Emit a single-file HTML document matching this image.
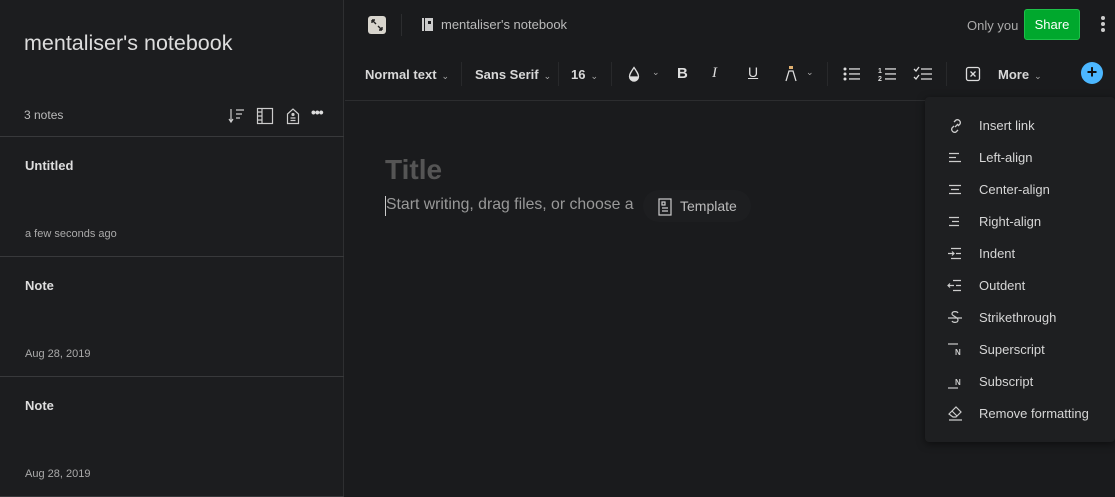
<!DOCTYPE html>
<html><head><meta charset="utf-8"><style>
*{margin:0;padding:0;box-sizing:border-box}
body{width:1115px;height:497px;background:#1a1b1d;font-family:"Liberation Sans",sans-serif;color:#ccc;position:relative;overflow:hidden}
.a{position:absolute;white-space:nowrap}
.side{position:absolute;left:0;top:0;width:344px;height:497px;background:#1c1d1f;border-right:1px solid #2e2f31}
.hl{position:absolute;left:0;width:344px;height:1px;background:#38393b}
.tb{font-size:13px;font-weight:bold;color:#d8d8d8;top:67px}
.chev{font-size:9px;color:#aaa;font-weight:normal;margin-left:5px}
.mi{position:absolute;left:979px;font-size:13px;color:#d6d6d6}
svg{position:absolute}
</style></head><body>
<div class="side">
<div class="a" style="left:24px;top:31px;font-size:21.5px;color:#ddd">mentaliser's notebook</div>
<div class="a" style="left:24px;top:108px;font-size:12px;color:#bbb">3 notes</div>
<svg style="left:228px;top:107px" width="18" height="18" viewBox="0 0 18 18" fill="none" stroke="#ccc" stroke-width="1.2"><path d="M3 2v13M1 12l2 3 2-3M8 3h8M8 7h6M8 11h4"/></svg>
<svg style="left:256px;top:107px" width="18" height="18" viewBox="0 0 18 18" fill="none" stroke="#ccc" stroke-width="1.2"><rect x="1.5" y="1.5" width="15" height="15"/><path d="M6 1.5v15M1.5 5h4.5M1.5 9h4.5M1.5 13h4.5"/></svg>
<svg style="left:286px;top:107px" width="14" height="18" viewBox="0 0 14 18" fill="none" stroke="#ccc" stroke-width="1.2"><path d="M1.5 7L7 2l5.5 5v9.5h-11z M4.5 11h5M4.5 13.5h5"/><circle cx="7" cy="7.5" r="1" fill="#ccc"/></svg>
<div class="a" style="left:311px;top:104px;font-size:14px;font-weight:bold;color:#ddd;letter-spacing:-1px">•••</div>
<div class="hl" style="top:136px"></div>
<div class="a" style="left:25px;top:158px;font-size:13px;font-weight:bold;color:#ddd">Untitled</div>
<div class="a" style="left:25px;top:228px;font-size:11px;color:#aaa">a few seconds ago</div>
<div class="hl" style="top:256px"></div>
<div class="a" style="left:25px;top:278px;font-size:13px;font-weight:bold;color:#ddd">Note</div>
<div class="a" style="left:25px;top:348px;font-size:11px;color:#aaa">Aug 28, 2019</div>
<div class="hl" style="top:376px"></div>
<div class="a" style="left:25px;top:398px;font-size:13px;font-weight:bold;color:#ddd">Note</div>
<div class="a" style="left:25px;top:468px;font-size:11px;color:#aaa">Aug 28, 2019</div>
<div class="hl" style="top:496px"></div>
</div>

<div class="a" style="left:368px;top:16px;width:18px;height:18px;background:#d8d5cd;border-radius:3px"></div>
<svg style="left:368px;top:16px" width="18" height="18" viewBox="0 0 18 18" fill="none" stroke="#222" stroke-width="1.4"><path d="M4 4l4 4M4 4h3M4 4v3M14 14l-4-4M14 14h-3M14 14v-3"/></svg>
<div class="a" style="left:401px;top:14px;width:1px;height:22px;background:#2c2d2f"></div>
<svg style="left:422px;top:18px" width="12" height="13" viewBox="0 0 12 13" fill="#ccc"><rect x="0" y="0" width="2" height="13"/><path d="M3 0h8v13H3z M6 3v3h3V3z" fill-rule="evenodd"/></svg>
<div class="a" style="left:441px;top:17px;font-size:13px;color:#bbb">mentaliser's notebook</div>
<div class="a" style="left:967px;top:18px;font-size:13px;color:#aaa">Only you</div>
<div class="a" style="left:1024px;top:9px;width:56px;height:31px;background:#00a82d;border-radius:3px;border:1px solid #1ec14a;color:#fff;font-size:13px;text-align:center;line-height:29px">Share</div>
<div class="a" style="left:1101px;top:16px;width:4px;height:4px;border-radius:2px;background:#ccc;box-shadow:0 6px 0 #ccc,0 12px 0 #ccc"></div>

<div class="a tb" style="left:365px">Normal text<span class="chev">⌄</span></div>
<div class="a" style="left:461px;top:62px;width:1px;height:24px;background:#28292b"></div>
<div class="a tb" style="left:475px">Sans Serif<span class="chev">⌄</span></div>
<div class="a" style="left:558px;top:62px;width:1px;height:24px;background:#28292b"></div>
<div class="a tb" style="left:571px">16<span class="chev">⌄</span></div>
<div class="a" style="left:611px;top:62px;width:1px;height:24px;background:#28292b"></div>
<svg style="left:627px;top:66px" width="14" height="16" viewBox="0 0 14 16" fill="none" stroke="#ddd" stroke-width="1.3"><path d="M7 1.5C4 6 2.5 8 2.5 10.5a4.5 4.5 0 0 0 9 0C11.5 8 10 6 7 1.5z"/><path d="M3 11h8a4 4 0 0 1-8 0z" fill="#ddd"/></svg>
<div class="a" style="left:652px;top:67px;font-size:9px;color:#aaa">⌄</div>
<div class="a" style="left:677px;top:65px;font-size:15px;font-weight:bold;color:#ddd">B</div>
<div class="a" style="left:712px;top:65px;font-size:15px;font-style:italic;color:#ddd;font-family:'Liberation Serif',serif">I</div>
<div class="a" style="left:748px;top:64px;font-size:14px;color:#ddd;text-decoration:underline">U</div>
<svg style="left:784px;top:65px" width="14" height="18" viewBox="0 0 14 18" fill="none" stroke="#ddd" stroke-width="1.3"><rect x="5" y="1" width="4" height="3" fill="#e0b070" stroke="none"/><path d="M2 16l3-10h4l3 10"/></svg>
<div class="a" style="left:806px;top:67px;font-size:9px;color:#aaa">⌄</div>
<div class="a" style="left:827px;top:62px;width:1px;height:24px;background:#28292b"></div>
<svg style="left:843px;top:67px" width="18" height="14" viewBox="0 0 18 14" fill="#ddd"><circle cx="2" cy="2" r="1.5"/><circle cx="2" cy="7" r="1.5"/><circle cx="2" cy="12" r="1.5"/><rect x="6" y="1.3" width="11" height="1.3"/><rect x="6" y="6.3" width="11" height="1.3"/><rect x="6" y="11.3" width="11" height="1.3"/></svg>
<svg style="left:878px;top:66px" width="20" height="16" viewBox="0 0 20 16"><text x="0" y="7" font-size="7" fill="#ddd" font-family="Liberation Sans" font-weight="bold">1</text><text x="0" y="15" font-size="7" fill="#ddd" font-family="Liberation Sans" font-weight="bold">2</text><g fill="#ddd"><rect x="7" y="2.3" width="11" height="1.3"/><rect x="7" y="7.3" width="11" height="1.3"/><rect x="7" y="12.3" width="11" height="1.3"/></g></svg>
<svg style="left:913px;top:66px" width="20" height="16" viewBox="0 0 20 16" fill="none" stroke="#ddd" stroke-width="1.3"><path d="M1 3l2 2 3-4M1 11l2 2 3-4M8 3h11M8 8h11M8 13h11"/></svg>
<div class="a" style="left:946px;top:62px;width:1px;height:24px;background:#28292b"></div>
<svg style="left:965px;top:66px" width="16" height="16" viewBox="0 0 16 16" fill="none" stroke="#ddd" stroke-width="1.3"><rect x="1.5" y="1.5" width="13" height="13" rx="2"/><path d="M5.5 5.5l5 5M10.5 5.5l-5 5"/></svg>
<div class="a tb" style="left:998px">More<span class="chev">⌄</span></div>
<div class="a" style="left:1081px;top:62px;width:22px;height:22px;border-radius:11px;background:#4cb7ff;color:#111;font-weight:bold;font-size:18px;text-align:center;line-height:21px">+</div>
<div class="a" style="left:345px;top:100px;width:770px;height:1px;background:#2c2d2f"></div>

<div class="a" style="left:385px;top:154px;font-size:28px;font-weight:bold;color:#555">Title</div>
<div class="a" style="left:385px;top:196px;width:1px;height:20px;background:#ccc"></div>
<div class="a" style="left:386px;top:196px;font-size:15.8px;color:#999">Start writing, drag files, or choose a</div>
<div class="a" style="left:643px;top:190px;width:108px;height:32px;border-radius:16px;background:#1d1e20"></div>
<svg style="left:658px;top:198px" width="14" height="18" viewBox="0 0 14 18" fill="none" stroke="#ccc" stroke-width="1.2"><rect x="1" y="1" width="12" height="16"/><path d="M4 4h3v3H4zM4 10h6M4 13h6"/></svg>
<div class="a" style="left:680px;top:198px;font-size:14px;color:#bbb">Template</div>

<div class="a" style="left:925px;top:97px;width:190px;height:345px;background:#1e1f21;border-radius:4px;box-shadow:0 2px 8px rgba(0,0,0,.5)"></div>
<svg style="left:947px;top:117px" width="18" height="18" viewBox="0 0 18 18" fill="none" stroke="#ccc" stroke-width="1.3"><path d="M8 10l3-3M7 5l2-2a3 3 0 0 1 4 4l-2 2M11 13l-2 2a3 3 0 0 1-4-4l2-2"/></svg>
<div class="mi" style="top:118px">Insert link</div>
<svg style="left:947px;top:150px" width="18" height="16" viewBox="0 0 18 16" stroke="#ccc" stroke-width="1.2"><path d="M2 3.5h10M2 7.5h7M2 11.5h12"/></svg>
<div class="mi" style="top:150px">Left-align</div>
<svg style="left:947px;top:182px" width="18" height="16" viewBox="0 0 18 16" stroke="#ccc" stroke-width="1.2"><path d="M2 3.5h12M4 7.5h8M2 11.5h12"/></svg>
<div class="mi" style="top:182px">Center-align</div>
<svg style="left:947px;top:214px" width="18" height="16" viewBox="0 0 18 16" stroke="#ccc" stroke-width="1.2"><path d="M2 3.5h10M5 7.5h7M2 11.5h10"/></svg>
<div class="mi" style="top:214px">Right-align</div>
<svg style="left:947px;top:246px" width="18" height="16" viewBox="0 0 18 16" fill="none" stroke="#ccc" stroke-width="1.2"><path d="M4 2.5h10M1 7.5h6M5 5.5l2 2-2 2M9 7.5h5M4 12.5h10"/></svg>
<div class="mi" style="top:246px">Indent</div>
<svg style="left:947px;top:278px" width="18" height="16" viewBox="0 0 18 16" fill="none" stroke="#ccc" stroke-width="1.2"><path d="M6 2.5h8M1 7.5h6M3 5.5l-2 2 2 2M9 7.5h5M6 12.5h8"/></svg>
<div class="mi" style="top:278px">Outdent</div>
<svg style="left:947px;top:309px" width="18" height="18" viewBox="0 0 18 18" fill="none" stroke="#ccc" stroke-width="1.2"><path d="M1 9h14M11 4c-1-2-6-2-6 1 0 2 6 3 6 6s-5 3-6 1"/></svg>
<div class="mi" style="top:310px">Strikethrough</div>
<svg style="left:947px;top:341px" width="18" height="18" viewBox="0 0 18 18"><path d="M1 3h10" stroke="#ccc" stroke-width="1.2"/><text x="8" y="14" font-size="8" font-weight="bold" fill="#ccc" font-family="Liberation Sans">N</text></svg>
<div class="mi" style="top:342px">Superscript</div>
<svg style="left:947px;top:373px" width="18" height="18" viewBox="0 0 18 18"><path d="M1 15h10" stroke="#ccc" stroke-width="1.2"/><text x="8" y="12" font-size="8" font-weight="bold" fill="#ccc" font-family="Liberation Sans">N</text></svg>
<div class="mi" style="top:374px">Subscript</div>
<svg style="left:947px;top:404px" width="18" height="18" viewBox="0 0 18 18" fill="none" stroke="#ccc" stroke-width="1.2"><path d="M2 10l7-7 5 5-5 5H6zM5 7l5 5M2 16h13"/></svg>
<div class="mi" style="top:406px">Remove formatting</div>
</body></html>
